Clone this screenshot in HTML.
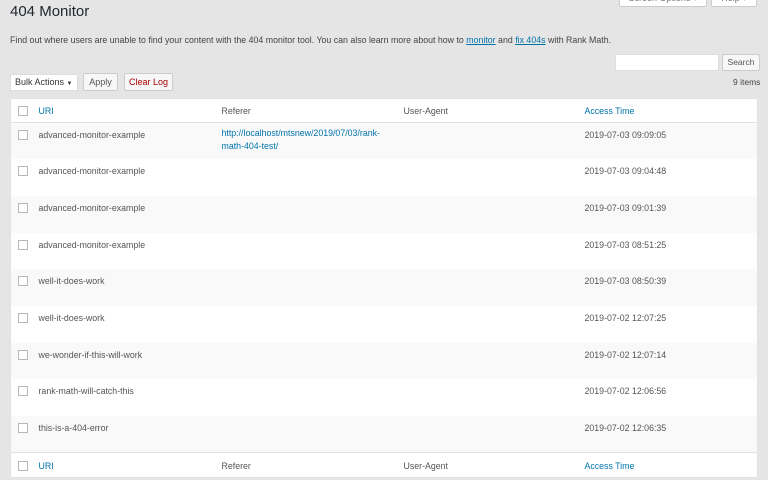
<!DOCTYPE html>
<html><head><meta charset="utf-8"><style>
*{box-sizing:border-box;margin:0;padding:0}
body{width:768px;height:480px;background:#e5e5e5;font-family:"Liberation Sans",sans-serif;color:#444;overflow:hidden;position:relative;font-size:9px}
.abs{position:absolute}
a{color:#0073aa}
.btn{position:absolute;background:#f7f7f7;border:1px solid #ccc;border-radius:2px;font-size:9px;color:#555;text-align:center}
table{position:absolute;left:10px;top:98px;width:748px;border-collapse:collapse;background:#fff;border:1px solid #e1e1e1;table-layout:fixed}
td{font-size:8.8px;vertical-align:top;color:#555;padding:0}
tr.r td{height:36.7px;padding-top:7px}
tr.h td{height:24px;padding-top:7px;border-bottom:1px solid #e1e1e1}
tr.f td{height:25px;padding-top:8px;border-top:1px solid #e1e1e1}
tr.s{background:#f9f9f9}
.cb{width:10px;height:10px;border:1px solid #b4b9be;background:#fff;margin-left:7px;margin-top:0}
.bl{color:#0073aa}
</style></head><body>
<div class="abs" style="left:10px;top:3px;font-size:15px;color:#23282d">404 Monitor</div>
<div class="btn" style="left:619px;top:-8px;width:88px;height:15px;background:#fff;line-height:11px;color:#777">Screen Options ▾</div>
<div class="btn" style="left:711px;top:-8px;width:46px;height:15px;background:#fff;line-height:11px;color:#777">Help ▾</div>
<div class="abs" style="left:10px;top:35px;font-size:8.8px;color:#444;white-space:nowrap">Find out where users are unable to find your content with the 404 monitor tool. You can also learn more about how to <a href="#">monitor</a> and <a href="#">fix 404s</a> with Rank Math.</div>
<div class="abs" style="left:615px;top:54px;width:104px;height:17px;background:#fff;border:1px solid #ddd"></div>
<div class="btn" style="left:722px;top:54px;width:38px;height:17px;line-height:15px;font-size:8.5px">Search</div>
<div class="abs" style="left:733px;top:77px;font-size:8.5px">9 items</div>
<div class="abs" style="left:10px;top:74px;width:68px;height:17px;background:#fff;border:1px solid #ddd;font-size:9px;color:#333;line-height:15px;padding-left:4px">Bulk Actions <span style="font-size:6px">▼</span></div>
<div class="btn" style="left:83px;top:73px;width:35px;height:18px;line-height:16px">Apply</div>
<div class="btn" style="left:124px;top:73px;width:49px;height:18px;line-height:16px;color:#a00">Clear Log</div>
<table>
<colgroup><col style="width:28px"><col style="width:183px"><col style="width:182px"><col style="width:181px"><col></colgroup>
<tr class="h"><td><div class="cb"></div></td><td class="bl">URI</td><td>Referer</td><td>User-Agent</td><td class="bl">Access Time</td></tr>
<tr class="r s"><td><div class="cb"></div></td><td>advanced-monitor-example</td><td class="bl" style="line-height:13px;padding-top:4px">http://localhost/mtsnew/2019/07/03/rank-<br>math-404-test/</td><td></td><td>2019-07-03 09:09:05</td></tr>
<tr class="r"><td><div class="cb"></div></td><td>advanced-monitor-example</td><td></td><td></td><td>2019-07-03 09:04:48</td></tr>
<tr class="r s"><td><div class="cb"></div></td><td>advanced-monitor-example</td><td></td><td></td><td>2019-07-03 09:01:39</td></tr>
<tr class="r"><td><div class="cb"></div></td><td>advanced-monitor-example</td><td></td><td></td><td>2019-07-03 08:51:25</td></tr>
<tr class="r s"><td><div class="cb"></div></td><td>well-it-does-work</td><td></td><td></td><td>2019-07-03 08:50:39</td></tr>
<tr class="r"><td><div class="cb"></div></td><td>well-it-does-work</td><td></td><td></td><td>2019-07-02 12:07:25</td></tr>
<tr class="r s"><td><div class="cb"></div></td><td>we-wonder-if-this-will-work</td><td></td><td></td><td>2019-07-02 12:07:14</td></tr>
<tr class="r"><td><div class="cb"></div></td><td>rank-math-will-catch-this</td><td></td><td></td><td>2019-07-02 12:06:56</td></tr>
<tr class="r s"><td><div class="cb"></div></td><td>this-is-a-404-error</td><td></td><td></td><td>2019-07-02 12:06:35</td></tr>
<tr class="f"><td><div class="cb"></div></td><td class="bl">URI</td><td>Referer</td><td>User-Agent</td><td class="bl">Access Time</td></tr>
</table>
</body></html>
